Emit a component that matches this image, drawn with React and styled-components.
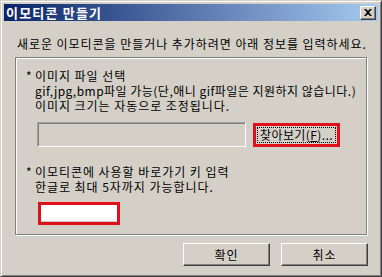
import styled, { createGlobalStyle } from 'styled-components';

const Global = createGlobalStyle`
  html, body {
    margin: 0;
    padding: 0;
    background: #d4d0c8;
  }
  * {
    box-sizing: border-box;
  }
`;

const Window = styled.div`
  width: 382px;
  height: 277px;
  background: #d4d0c8;
  border: 1px solid;
  border-color: #d4d0c8 #404040 #404040 #d4d0c8;
  box-shadow: inset 1px 1px #fff, inset -1px -1px #808080;
  padding: 3px;
  display: flex;
  flex-direction: column;
  font-family: 'Noto Sans CJK KR', 'Noto Sans', sans-serif;
  font-size: 12px;
  letter-spacing: 0.95px;
  color: #000;
`;

const TitleBar = styled.div`
  height: 17px;
  background: linear-gradient(to right, #0a246a, #a6caf0);
  display: flex;
  align-items: center;
  justify-content: space-between;
  padding: 0 2px 0 2px;
`;

const Title = styled.span`
  color: #fff;
  font-weight: bold;
  font-size: 13px;
  line-height: 17px;
  letter-spacing: 1.2px;
`;

const CloseButton = styled.div`
  width: 16px;
  height: 14px;
  background: #d4d0c8;
  border: 1px solid;
  border-color: #fff #404040 #404040 #fff;
  box-shadow: inset -1px -1px #808080;
  display: flex;
  align-items: center;
  justify-content: center;
`;

const Body = styled.div`
  flex: 1;
  display: flex;
  flex-direction: column;
  padding: 0 11px 0 11px;
`;

const Intro = styled.p`
  margin: 15px 0 0 2px;
  line-height: 15px;
  white-space: nowrap;
`;

const Panel = styled.div`
  margin-top: 6px;
  height: 178px;
  border: 1px solid #808080;
  box-shadow: inset 1px 1px #fff, 1px 1px #fff;
  padding: 10px 0 0 19px;
`;

const Section = styled.div`
  margin-top: ${(p) => p.$gap || 0}px;
`;

const Line = styled.div`
  line-height: 15px;
  white-space: nowrap;
  letter-spacing: ${(p) => p.$spacing ?? 0.95}px;
`;

const Star = styled.span`
  display: inline-block;
  width: 9px;
  margin-left: -9px;
`;

const FileRow = styled.div`
  display: flex;
  align-items: center;
  margin: 8px 0 0 2px;
  gap: 7px;
`;

const FileField = styled.div`
  width: 209px;
  height: 25px;
  background: #d4d0c8;
  border: 1px solid;
  border-color: #a0a0a0 #fff #fff #a0a0a0;
  box-shadow: inset 1px 1px #808080;
`;

const BrowseButton = styled.div`
  width: 87px;
  height: 24px;
  margin-top: 2px;
  border: 3px solid #e0101a;
  background: #d4d0c8;
  padding: 1px;
`;

const Focus = styled.div`
  height: 100%;
  border: 1px dotted #000;
  display: flex;
  align-items: center;
  justify-content: center;
  white-space: nowrap;
  line-height: 14px;
  letter-spacing: 0.4px;
  u {
    text-underline-offset: 1px;
  }
`;

const KeyInput = styled.div`
  width: 82px;
  height: 23px;
  margin: 8px 0 0 3px;
  border: 3px solid #e0101a;
  background: #fff;
  box-shadow: inset 0 -1px #c8c8c8;
`;

const Footer = styled.div`
  display: flex;
  justify-content: flex-end;
  gap: 11px;
  margin: 8px -1px 0 0;
`;

const Button = styled.div`
  width: 87px;
  height: 23px;
  background: #d4d0c8;
  border: 1px solid;
  border-color: #fff #404040 #404040 #fff;
  box-shadow: inset -1px -1px #808080;
  display: flex;
  align-items: center;
  justify-content: center;
  line-height: 14px;
`;

export default function App() {
  return (
    <>
      <Global />
      <Window>
        <TitleBar>
          <Title>이모티콘 만들기</Title>
          <CloseButton>
            <svg width="8" height="7" viewBox="0 0 8 7">
              <path d="M0 0h2l2 2 2-2h2L5 3.5 8 7H6L4 5 2 7H0l3-3.5z" fill="#000" />
            </svg>
          </CloseButton>
        </TitleBar>
        <Body>
          <Intro>새로운 이모티콘을 만들거나 추가하려면 아래 정보를 입력하세요.</Intro>
          <Panel>
            <Section>
              <Line>
                <Star>*</Star>이미지 파일 선택
              </Line>
              <Line $spacing={0.48}>gif,jpg,bmp파일 가능(단,애니 gif파일은 지원하지 않습니다.)</Line>
              <Line>이미지 크기는 자동으로 조정됩니다.</Line>
            </Section>
            <FileRow>
              <FileField />
              <BrowseButton>
                <Focus>
                  찾아보기(<u>F</u>)...
                </Focus>
              </BrowseButton>
            </FileRow>
            <Section $gap={17}>
              <Line>
                <Star>*</Star>이모티콘에 사용할 바로가기 키 입력
              </Line>
              <Line>한글로 최대 5자까지 가능합니다.</Line>
            </Section>
            <KeyInput />
          </Panel>
          <Footer>
            <Button>확인</Button>
            <Button>취소</Button>
          </Footer>
        </Body>
      </Window>
    </>
  );
}
